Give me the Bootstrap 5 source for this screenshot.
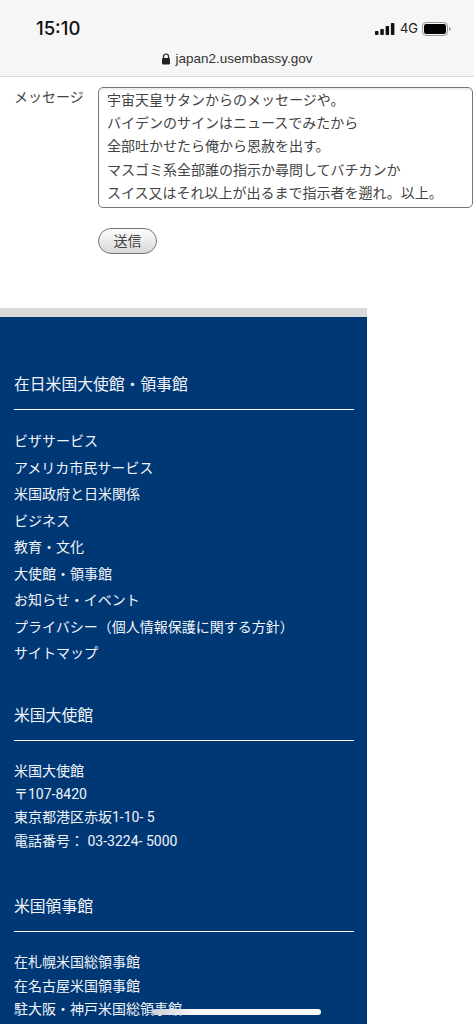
<!DOCTYPE html>
<html lang="ja">
<head>
<meta charset="utf-8">
<meta name="viewport" content="width=device-width, initial-scale=1">
<link href="https://cdn.jsdelivr.net/npm/bootstrap@5.3.0/dist/css/bootstrap.min.css" rel="stylesheet">
<style>
html,body{height:1024px;overflow:hidden;background:#fff}
body{font-family:"Liberation Sans","Noto Sans CJK JP",sans-serif;position:relative}
.phone-bar{height:77px;background:#f6f6f6;border-bottom:1px solid #d9d9d9;padding:0 22px 0 36px}
.status-line{height:45px;padding-top:13px}
.clock{font-family:Inter,"Liberation Sans",sans-serif;font-size:18.5px;font-weight:500;color:#111}
.net{font-size:13px;color:#222;font-family:Inter,"Liberation Sans",sans-serif}
.url-line{font-size:13.5px;color:#333;height:20px;margin-top:4px;margin-right:14px}
.msg-form{height:231px;padding:10px 0 0 14px;color:#444;font-size:14px}
.msg-label{width:84px;line-height:20px;color:#444}
.msg-box{width:375px;height:121px;border:1px solid #777;border-radius:5px;padding:1px 8px;font-size:14px;line-height:23.2px;color:#444;box-shadow:inset 0 2px 1px #eee;white-space:nowrap}
.send-btn{margin:20px 0 0 84px;width:59px;height:26px;border:1px solid #777;border-radius:13px;background:linear-gradient(#fdfdfd,#d8d8d8);font-size:14px;line-height:24px;color:#444;text-align:center;padding:0}
.foot-panel{width:367px;height:716px;background:#003876;border-top:9px solid #dadada;padding:0 13px 0 14px;color:#f1f4f9;font-size:14px;overflow:hidden;font-family:Roboto,"Noto Sans CJK JP",sans-serif}
.foot-title{font-family:inherit;font-size:15.8px;line-height:22px;margin:0;padding-bottom:13px;border-bottom:1px solid #fff;font-weight:400}
.foot-links{line-height:26.5px;margin:18px 0 0;padding:0;list-style:none;white-space:nowrap}
.foot-addr{line-height:23.4px;margin:19px 0 0;padding:0;list-style:none}
.first-title{margin-top:57px}
.mid-title{margin-top:38px}
.low-title{margin-top:43px}
.home-pill{position:absolute;left:152px;top:1009px;width:169px;height:6px;border-radius:3px;background:linear-gradient(90deg,#c9ced6,#f8f8f8 25%)}
</style>
</head>
<body>
<div class="phone-bar">
  <div class="status-line d-flex justify-content-between align-items-center">
    <span class="clock">15:10</span>
    <span class="net d-flex align-items-center gap-1">
      <svg width="21" height="12" viewBox="0 0 21 12"><rect x="0" y="8" width="3.5" height="4" rx=".7" fill="#111"/><rect x="5.3" y="6" width="3.5" height="6" rx=".7" fill="#111"/><rect x="10.6" y="3" width="3.5" height="9" rx=".7" fill="#111"/><rect x="15.9" y="0" width="3.5" height="12" rx=".7" fill="#111"/></svg>
      <span>4G</span>
      <svg width="30" height="14" viewBox="0 0 30 14"><rect x=".5" y=".5" width="25" height="13" rx="3.5" fill="none" stroke="#999"/><rect x="2" y="2" width="22" height="10" rx="2.2" fill="#000"/><path d="M27 5v4c1-.3 1.7-1 1.7-2S28 5.300 27 5z" fill="#999"/></svg>
    </span>
  </div>
  <div class="url-line d-flex justify-content-center align-items-center gap-1">
    <svg width="10" height="12" viewBox="0 0 10 12"><path d="M2.500 5V3.500a2.500 2.500 0 0 1 5 0V5" fill="none" stroke="#222" stroke-width="1.200"/><rect x="1" y="5" width="8" height="6.500" rx="1.200" fill="#222"/></svg>
    <span>japan2.usembassy.gov</span>
  </div>
</div>
<div class="msg-form">
  <div class="d-flex">
    <div class="msg-label">メッセージ</div>
    <div class="msg-box">宇宙天皇サタンからのメッセージや。<br>バイデンのサインはニュースでみたから<br>全部吐かせたら俺から恩赦を出す。<br>マスゴミ系全部誰の指示か尋問してバチカンか<br>スイス又はそれ以上が出るまで指示者を遡れ。以上。</div>
  </div>
  <button type="button" class="send-btn d-block">送信</button>
</div>
<div class="foot-panel">
  <h2 class="foot-title first-title">在日米国大使館・領事館</h2>
  <ul class="foot-links">
    <li>ビザサービス</li>
    <li>アメリカ市民サービス</li>
    <li>米国政府と日米関係</li>
    <li>ビジネス</li>
    <li>教育・文化</li>
    <li>大使館・領事館</li>
    <li>お知らせ・イベント</li>
    <li>プライバシー（個人情報保護に関する方針）</li>
    <li>サイトマップ</li>
  </ul>
  <h2 class="foot-title mid-title">米国大使館</h2>
  <ul class="foot-addr">
    <li>米国大使館</li>
    <li>〒107-8420</li>
    <li>東京都港区赤坂1-10- 5</li>
    <li>電話番号： 03-3224- 5000</li>
  </ul>
  <h2 class="foot-title low-title">米国領事館</h2>
  <ul class="foot-addr">
    <li>在札幌米国総領事館</li>
    <li>在名古屋米国領事館</li>
    <li>駐大阪・神戸米国総領事館</li>
  </ul>
</div>
<div class="home-pill"></div>
<script src="https://cdn.jsdelivr.net/npm/bootstrap@5.3.0/dist/js/bootstrap.bundle.min.js"></script>
</body>
</html>
